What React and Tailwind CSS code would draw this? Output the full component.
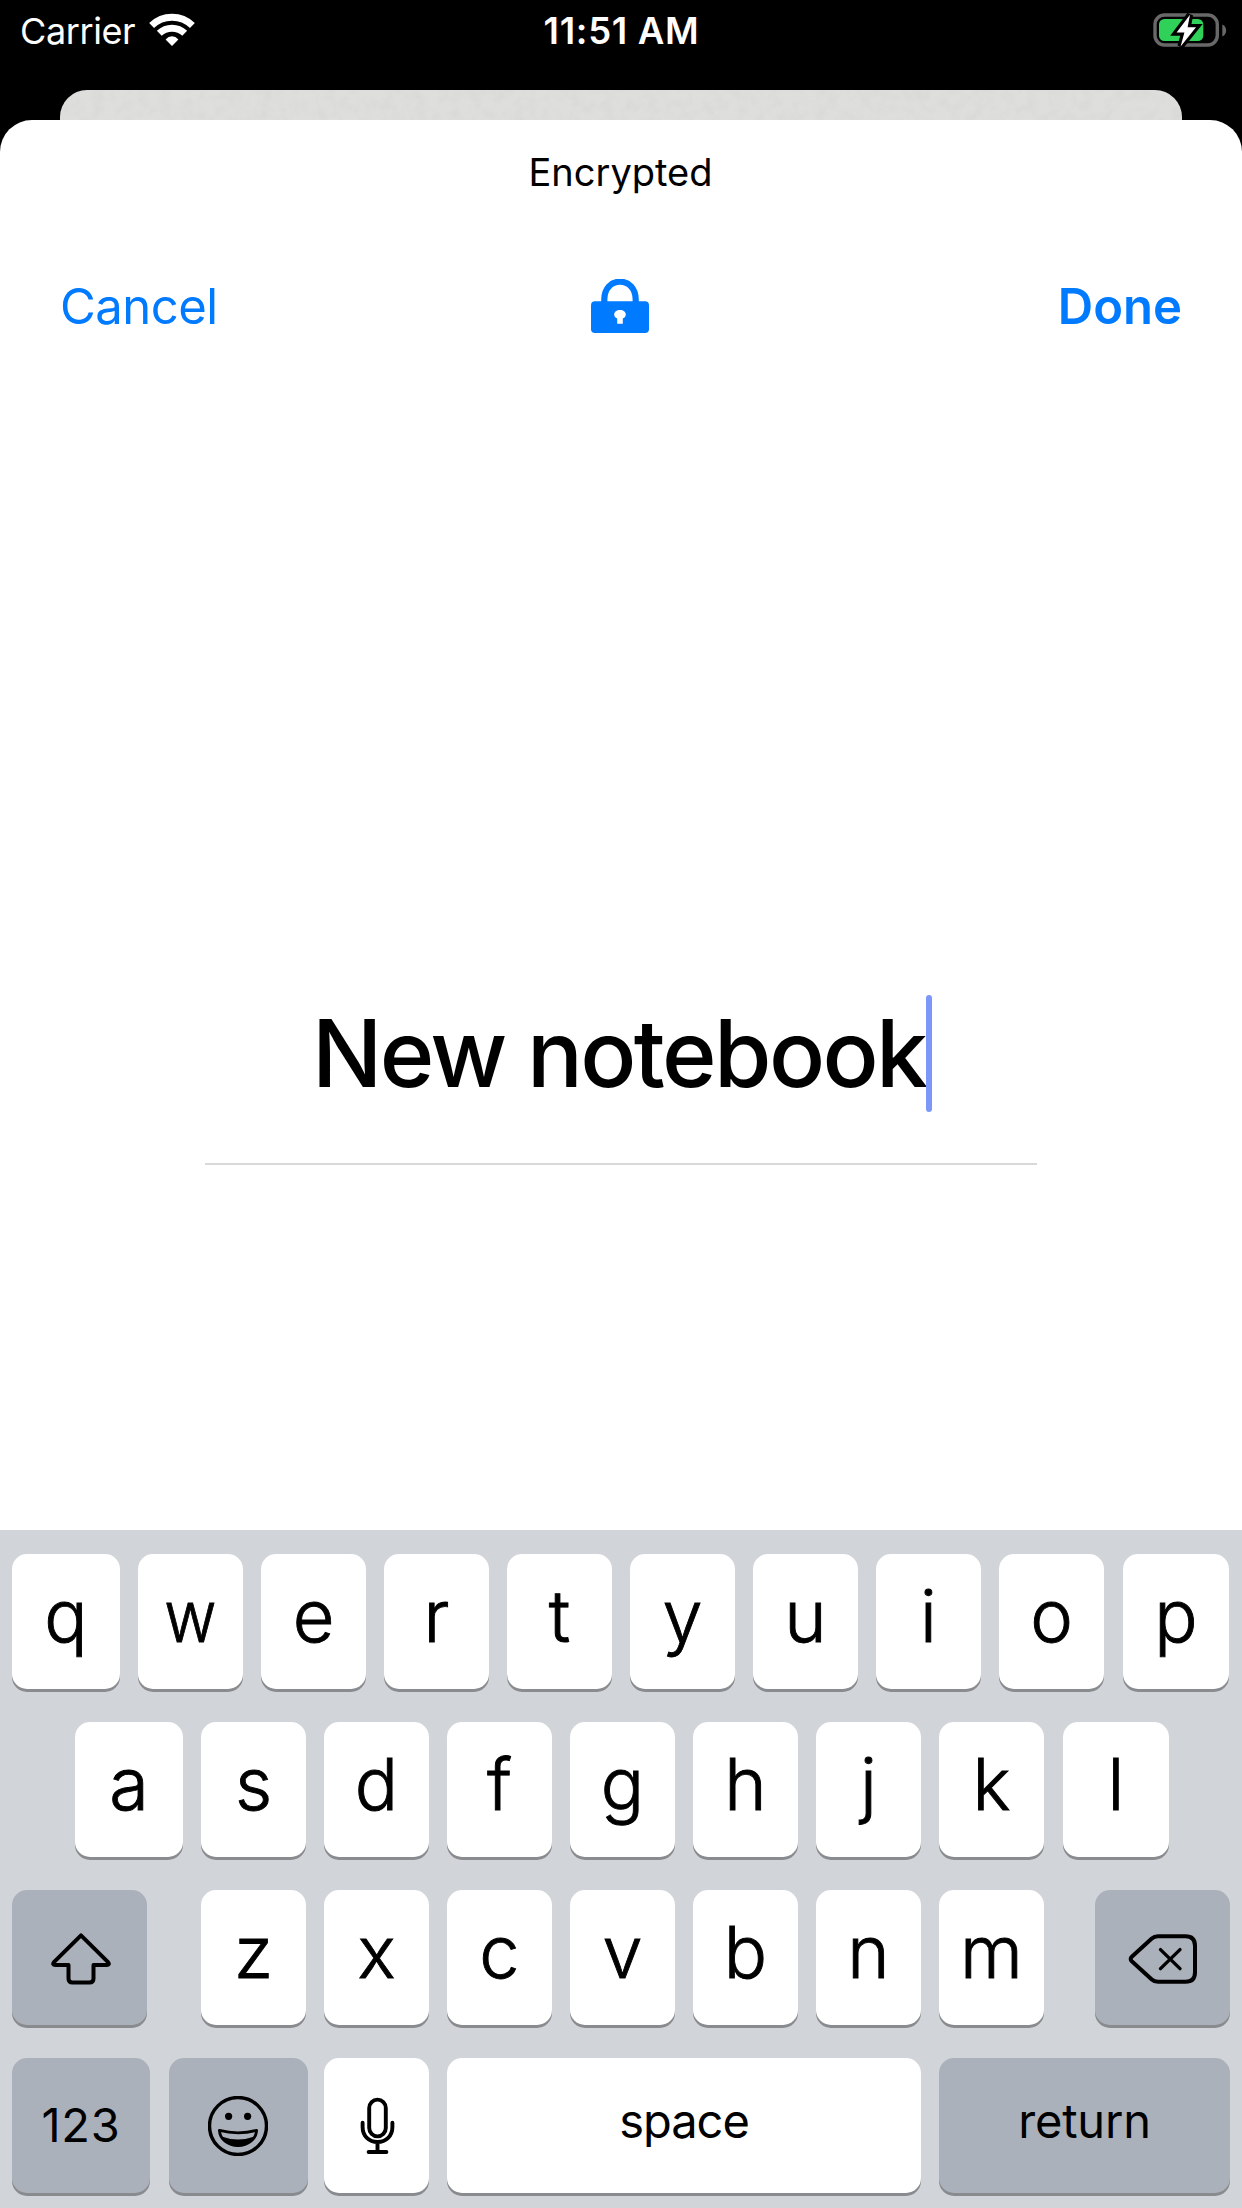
import React from "react";

const Wifi = () => (
  <svg width="46" height="34" viewBox="0 0 46 34" fill="none" stroke="#fff" strokeWidth="7">
    <path d="M2.6 12.4A29.3 29.3 0 0 1 43.4 12.4" />
    <path d="M10.3 20.3A18.3 18.3 0 0 1 35.7 20.3" />
    <path d="M23 33L16.6 26.4Q19.4 23.2 23 23.2T29.4 26.4Z" fill="#fff" stroke="none" />
  </svg>
);

const Battery = () => (
  <svg width="74" height="36" viewBox="0 0 74 36" fill="none">
    <rect x="2" y="2" width="62.3" height="30" rx="9.5" stroke="#686868" strokeWidth="3.4" />
    <path d="M69.3 11.4C74.4 13.2 74.4 21.6 69.3 23.4Z" fill="#686868" />
    <rect x="6" y="6" width="44.3" height="22" rx="5.5" fill="#30d158" />
    <path
      d="M37 1.8L23.6 19.6H31.4L27.6 33.4L43 14.2H34.6Z"
      fill="#fff"
      stroke="#000"
      strokeWidth="6.4"
      paintOrder="stroke"
    />
  </svg>
);

const Lock = () => (
  <svg width="58" height="54" viewBox="0 0 58 54" fill="none">
    <path d="M13.3 26V20.5C13.3 9 20.5 2.7 29 2.7S44.7 9 44.7 20.5V26" stroke="#007aff" strokeWidth="6.2" />
    <rect y="22.3" width="58" height="31.7" rx="4" fill="#007aff" />
    <path
      d="M29 31C32.4 31 34.8 32.9 34.8 35.5C34.8 37.3 33.7 38.8 31.8 39.6V44.7H26.2V39.6C24.3 38.8 23.2 37.3 23.2 35.5C23.2 32.9 25.6 31 29 31Z"
      fill="#fff"
    />
  </svg>
);

const Shift = () => (
  <svg width="60" height="52" viewBox="0 0 60 52" fill="none" stroke="#000" strokeWidth="4" strokeLinejoin="round">
    <path d="M30 2.3L56.8 28.8C58.6 30.8 57.8 32.1 55.6 32.1H42.5V45.5Q42.5 49.5 38.5 49.5H21.5Q17.5 49.5 17.5 45.5V32.1H4.4C2.2 32.1 1.4 30.8 3.2 28.8Z" />
  </svg>
);

const Delete = () => (
  <svg width="70" height="52" viewBox="0 0 70 52" fill="none" stroke="#000" strokeWidth="4" strokeLinejoin="round" strokeLinecap="round">
    <path d="M30 3.2H57.5Q67 3.2 67 12.7V39.3Q67 48.8 57.5 48.8H30Q26.3 48.8 23.8 46.5L3.8 28.2Q1.5 26 3.8 23.8L23.8 5.5Q26.3 3.2 30 3.2Z" />
    <path d="M32.5 16.6L52 35.6M52 16.6L32.5 35.6" strokeWidth="3.4" />
  </svg>
);

const Emoji = () => (
  <svg width="60" height="60" viewBox="0 0 60 60" fill="none" stroke="#000">
    <circle cx="30" cy="30" r="28.5" strokeWidth="3.4" />
    <circle cx="20.6" cy="20.3" r="3.6" fill="#000" stroke="none" />
    <circle cx="39.6" cy="20.3" r="3.6" fill="#000" stroke="none" />
    <path d="M11.4 34.4Q30 39.2 48.6 34.4C48.2 43 40 49.6 30 49.6S11.8 43 11.4 34.4Z" strokeWidth="2.8" strokeLinejoin="round" />
    <path d="M13.4 40.5Q30 46.5 46.6 40.5C43.5 47 37.5 50 30 50S16.5 47 13.4 40.5Z" fill="#000" stroke="none" />
  </svg>
);

const Mic = () => (
  <svg width="35" height="58" viewBox="0 0 35 58" fill="none" stroke="#000" strokeWidth="3.9" strokeLinecap="round">
    <rect x="9.2" y="2.6" width="16.6" height="36.8" rx="8.3" />
    <path d="M2.6 25.8V30C2.6 39 9 45 17.5 45S32.4 39 32.4 30V25.8M17.5 46V53M8.6 55H26.4" />
  </svg>
);

const base = "flex h-[135px] shrink-0 items-center justify-center rounded-[15px] shadow-[0_3px_0_#898b8e]";

function Letter({ ch, width = "w-[105px]" }) {
  return (
    <button className={`${base} ${width} bg-white pb-[12px] text-[72px] leading-none font-light [-webkit-text-stroke:0.9px_#000]`}>
      <span className={ch === "w" ? "scale-x-[0.89]" : ""}>{ch}</span>
    </button>
  );
}

function Key({ className, children }) {
  return <button className={`${base} ${className}`}>{children}</button>;
}

export default function App() {
  return (
    <div className="flex h-[2208px] w-[1242px] flex-col overflow-hidden bg-black font-[Inter,sans-serif] text-black">
      <header className="grid h-[90px] shrink-0 grid-cols-3 items-start pr-[15px] pl-5 text-[36px] leading-[62px] text-white">
        <div className="flex">
          <span className="w-[129px] tracking-[-0.4px]">Carrier</span>
          <span className="pt-[13px]"><Wifi /></span>
        </div>
        <span className="pr-[4px] text-center text-[36.5px] font-semibold tracking-[0.7px]">11:51 AM</span>
        <div className="flex justify-end pt-[13px]"><Battery /></div>
      </header>

      <div className="mx-[60px] h-[30px] shrink-0 overflow-hidden rounded-t-[27px] bg-[#dededc]">
        <svg width="1122" height="30">
          <filter id="paper" x="0" y="0" width="100%" height="100%">
            <feTurbulence type="fractalNoise" baseFrequency="0.09" numOctaves="3" seed="4" />
            <feColorMatrix values="0 0 0 0 0.45  0 0 0 0 0.45  0 0 0 0 0.43  0.25 0 0 0 -0.1" />
          </filter>
          <rect width="1122" height="30" filter="url(#paper)" />
        </svg>
      </div>

      <div className="bg-black">
        <main className="flex h-[1410px] flex-col rounded-t-[32px] bg-white">
          <h1 className="pr-px text-center text-[38px] leading-[104px]">Encrypted</h1>
          <nav className="grid h-[164px] grid-cols-3 items-center px-[60px] text-[49px] leading-[166px] text-[#007aff]">
            <span className="text-left tracking-[-0.5px]">Cancel</span>
            <span className="flex justify-center pr-0.5 pb-0.5"><Lock /></span>
            <span className="text-right font-semibold">Done</span>
          </nav>
          <div className="mx-[205px] mt-[607px] flex border-b-2 border-[#d9d9d9] pb-[51px] pl-[107px]">
            <span className="h-[117px] w-[614px] text-[93px] leading-[117px] font-medium tracking-[-2.6px] whitespace-nowrap">
              New notebook
            </span>
            <span className="h-[117px] w-[6px] rounded-full bg-[#7c97f8]" />
          </div>
        </main>
      </div>

      <section className="flex h-[678px] shrink-0 flex-col gap-[33px] bg-[#d1d4d9] pt-6">
        <div className="flex gap-[18px] pl-3">
          <Letter ch="q" width="w-[108px]" />
          {[..."wertyuio"].map((c) => <Letter key={c} ch={c} />)}
          <Letter ch="p" width="ml-px w-[106px]" />
        </div>
        <div className="flex gap-[18px] pl-[75px]">
          <Letter ch="a" width="w-[108px]" />
          {[..."sdfghjk"].map((c) => <Letter key={c} ch={c} />)}
          <Letter ch="l" width="ml-px w-[106px]" />
        </div>
        <div className="flex justify-between px-3">
          <Key className="w-[135px] bg-[#abb1bb] pt-[3px] pl-[3px]"><Shift /></Key>
          <div className="flex gap-[18px] pl-[3px]">
            {[..."zxcvbnm"].map((c) => <Letter key={c} ch={c} />)}
          </div>
          <Key className="w-[135px] bg-[#abb1bb] pt-[3px]"><Delete /></Key>
        </div>
        <div className="flex px-3 text-[47px] leading-none">
          <Key className="w-[138px] bg-[#abb1bb] pb-[3px] tracking-[0.8px]">123</Key>
          <Key className="ml-[19px] w-[139px] bg-[#abb1bb] pr-[2px]"><Emoji /></Key>
          <Key className="ml-4 w-[105px] bg-white pl-0.5"><Mic /></Key>
          <Key className="ml-[18px] w-[474px] bg-white pb-[10px] tracking-[-1px]">space</Key>
          <Key className="ml-[18px] w-[291px] bg-[#abb1bb] pb-[10px] tracking-[-0.2px]">return</Key>
        </div>
      </section>
    </div>
  );
}
